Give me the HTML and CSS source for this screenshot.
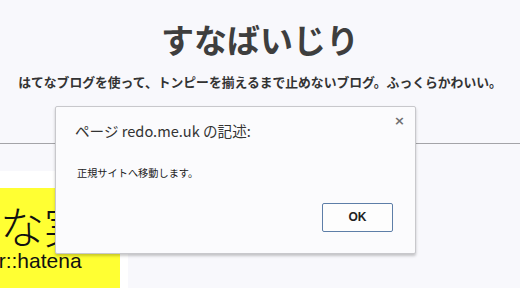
FILE: index.html
```html
<!DOCTYPE html>
<html lang="ja">
<head>
<meta charset="utf-8">
<link rel="stylesheet" href="styles.css">
</head>
<body>
<header class="site-header">
  <h1 class="site-title">すなばいじり</h1>
  <p class="site-desc">はてなブログを使って、トンピーを揃えるまで止めないブログ。ふっくらかわいい。</p>
</header>
<main class="content">
  <aside class="side">
    <div class="banner">
      <div class="banner-big">な実装</div>
      <div class="banner-small">er::hatena</div>
    </div>
  </aside>
</main>
<div class="dialog" role="dialog">
  <div class="dialog-title">ページ redo.me.uk の記述:</div>
  <span class="dialog-close">×</span>
  <div class="dialog-msg">正規サイトへ移動します。</div>
  <div class="dialog-actions"><button class="btn-ok">OK</button></div>
</div>
</body>
</html>
```
FILE: styles.css
```css
html, body {
  margin: 0;
  padding: 0;
  height: 288px;
  overflow: hidden;
}
body {
  background: #f8f8fc;
  font-family: "Noto Sans CJK JP", "Noto Sans", sans-serif;
  color: #333;
}
.site-header {
  text-align: center;
  padding-top: 16px;
  height: 127px;
  border-bottom: 1px solid #a4a4a8;
}
.site-title {
  margin: 0;
  font-size: 33px;
  line-height: 46px;
  font-weight: 700;
  color: #3e3e3e;
}
.site-desc {
  margin: 10px 0 0;
  font-size: 12.8px;
  font-weight: 700;
  color: #333;
  line-height: 20px;
}
.content {
  display: flex;
  padding-top: 27px;
}
.side {
  width: 128px;
  background: #ffffff;
  padding-top: 17px;
  height: 100px;
}
.banner {
  width: 120px;
  height: 100px;
  background: #ffff33;
  overflow: hidden;
  color: #111;
}
.banner-big {
  font-size: 44px;
  line-height: 44px;
  margin-top: 15px;
  white-space: nowrap;
  font-weight: 300;
}
.banner-small {
  font-family: "Liberation Sans", Arial, sans-serif;
  font-size: 21px;
  line-height: 22px;
  margin-top: 3px;
  margin-left: -13px;
  white-space: nowrap;
}
.dialog {
  position: absolute;
  left: 55px;
  top: 106px;
  width: 359px;
  height: 146px;
  background: #fbfbfd;
  border: 1px solid #c8c8cc;
  border-radius: 2px;
  box-shadow: 0 2px 3px rgba(0,0,0,0.22);
}
.dialog-title {
  position: absolute;
  left: 19px;
  top: 14px;
  font-size: 14.6px;
  line-height: 20px;
  color: #333;
}
.dialog-close {
  position: absolute;
  right: 10px;
  top: 6px;
  font-family: "DejaVu Sans", sans-serif;
  font-size: 13px;
  font-weight: 700;
  color: #707070;
}
.dialog-msg {
  position: absolute;
  left: 21px;
  top: 58px;
  font-size: 10.2px;
  line-height: 16px;
  color: #222;
}
.dialog-actions {
  position: absolute;
  right: 22px;
  top: 95px;
}
.btn-ok {
  width: 71px;
  height: 29px;
  background: #fdfdfd;
  border: 1px solid #5d7ea8;
  border-radius: 2px;
  font-family: "Liberation Sans", Arial, sans-serif;
  font-weight: 700;
  font-size: 12px;
  color: #222;
  padding: 0;
}
```
